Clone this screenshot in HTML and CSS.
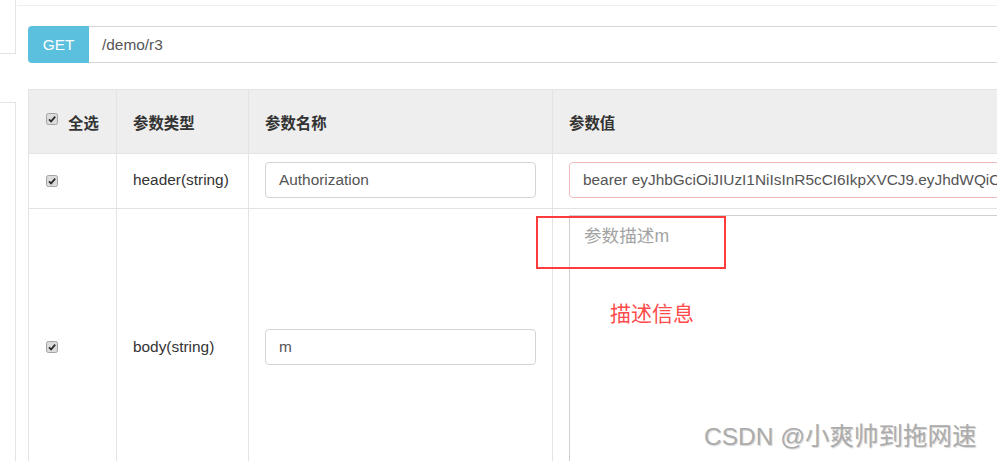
FILE: index.html
```html
<!DOCTYPE html>
<html lang="zh-CN">
<head>
<meta charset="utf-8">
<title>GET /demo/r3</title>
<link rel="stylesheet" href="styles.css">
</head>
<body>
<div class="page">
  <aside class="side">
    <div class="side-top"></div>
    <div class="side-bottom"></div>
  </aside>
  <main class="main">
    <div class="url-bar">
      <span class="method">GET</span>
      <div class="url-input">/demo/r3</div>
    </div>
    <table class="params">
      <colgroup>
        <col class="w-check">
        <col class="w-type">
        <col class="w-name">
        <col class="w-value">
      </colgroup>
      <thead>
        <tr>
          <th class="c-check"><span class="cb cb-head"><svg viewBox="0 0 12 12" width="12" height="12"><rect x="0.5" y="0.5" width="11" height="11" rx="2" fill="#dcdcdc" stroke="#a3a3a3"/><path d="M3 6.3l2.1 2.1L9.2 3.6" fill="none" stroke="#2a2a2a" stroke-width="1.7"/></svg></span><span class="all">全选</span></th>
          <th>参数类型</th>
          <th>参数名称</th>
          <th>参数值</th>
        </tr>
      </thead>
      <tbody>
        <tr class="row-header">
          <td class="c-check"><span class="cb"><svg viewBox="0 0 12 12" width="12" height="12"><rect x="0.5" y="0.5" width="11" height="11" rx="2" fill="#dcdcdc" stroke="#a3a3a3"/><path d="M3 6.3l2.1 2.1L9.2 3.6" fill="none" stroke="#2a2a2a" stroke-width="1.7"/></svg></span></td>
          <td>header(string)</td>
          <td><div class="field">Authorization</div></td>
          <td><div class="field field-error">bearer eyJhbGciOiJIUzI1NiIsInR5cCI6IkpXVCJ9.eyJhdWQiOlsicmVzMSJdLCJ1c2VyX25hbWUiOiJ6aGFuZ3NhbiJ9</div></td>
        </tr>
        <tr class="row-body">
          <td class="c-check"><span class="cb"><svg viewBox="0 0 12 12" width="12" height="12"><rect x="0.5" y="0.5" width="11" height="11" rx="2" fill="#dcdcdc" stroke="#a3a3a3"/><path d="M3 6.3l2.1 2.1L9.2 3.6" fill="none" stroke="#2a2a2a" stroke-width="1.7"/></svg></span></td>
          <td>body(string)</td>
          <td><div class="field">m</div></td>
          <td class="c-area"><div class="area"><span class="placeholder">参数描述m</span></div></td>
        </tr>
      </tbody>
    </table>
  </main>
  <div class="annot-box"></div>
  <div class="annot-text">描述信息</div>
  <div class="watermark">CSDN @小爽帅到拖网速</div>
</div>
</body>
</html>
```

FILE: styles.css
```css
html, body {
  margin: 0;
  padding: 0;
  background: #fff;
}
body {
  width: 1007px;
  height: 461px;
  overflow: hidden;
  font-family: "Liberation Sans", "Noto Sans CJK SC", sans-serif;
  font-size: 15.4px;
  color: #333;
}
.page {
  position: relative;
  display: flex;
  width: 1007px;
  height: 461px;
  overflow: hidden;
}
.side {
  width: 16px;
  flex: none;
  display: flex;
  flex-direction: column;
}
.side-top {
  height: 53px;
  border-right: 1px solid #e3e3e3;
  border-bottom: 1px solid #e3e3e3;
}
.side-bottom {
  margin-top: 48px;
  flex: 1;
  border-right: 1px solid #e3e3e3;
  border-top: 1px solid #e3e3e3;
}
.main {
  width: 969px;
  flex: none;
  margin-left: 1px;
  margin-top: 5px;
  border-top: 1px solid #eeeeee;
  padding-left: 11px;
  overflow: hidden;
}
.url-bar {
  display: flex;
  margin-top: 20px;
  height: 37px;
  width: 1000px;
}
.method {
  width: 61px;
  flex: none;
  background: #5bc0de;
  color: #fff;
  border-radius: 4px 0 0 4px;
  display: flex;
  align-items: center;
  justify-content: center;
  font-size: 15.4px;
}
.url-input {
  flex: 1;
  border: 1px solid #d6d6d6;
  border-left: none;
  display: flex;
  align-items: center;
  padding-left: 13px;
  color: #555;
}
.params {
  margin-top: 26px;
  border-collapse: collapse;
  table-layout: fixed;
  width: 1100px;
  border: 1px solid #e0e0e0;
}
.w-check { width: 88px; }
.w-type { width: 132px; }
.w-name { width: 304px; }
.w-value { width: 576px; }
.params th,
.params td {
  border: 1px solid #e3e3e3;
  padding: 0 16px;
  text-align: left;
  vertical-align: middle;
}
.params th {
  background: #eeeeee;
  height: 63px;
  font-weight: bold;
  color: #333;
}
.params td.c-check,
.params th.c-check {
  padding-left: 17px;
}
.cb {
  display: inline-block;
  width: 12px;
  height: 12px;
  vertical-align: middle;
}
.cb svg {
  display: block;
}
.cb-head {
  vertical-align: 4px;
}
.all {
  margin-left: 10px;
}
.row-header td {
  height: 52px;
  padding-top: 0;
  padding-bottom: 2px;
}
.field {
  box-sizing: border-box;
  height: 36px;
  border: 1px solid #d4d4d4;
  border-radius: 4px;
  padding: 0 13px;
  display: flex;
  align-items: center;
  color: #555;
  white-space: nowrap;
  overflow: hidden;
}
.field-error {
  border-color: #efbcbc;
  width: 600px;
  border-radius: 4px;
}
.row-body td {
  height: 269px;
}
.params td.c-area {
  vertical-align: top;
  padding-top: 6px;
}
.area {
  box-sizing: border-box;
  height: 262px;
  width: 600px;
  border-left: 1px solid #cfcfcf;
  border-top: 1px solid #cfcfcf;
  padding: 8px 14px;
  font-size: 17.6px;
  line-height: 24px;
}
.placeholder {
  color: #a3a3a3;
}
.annot-box {
  position: absolute;
  left: 536px;
  top: 216px;
  width: 190px;
  height: 53px;
  box-sizing: border-box;
  border: 2px solid #ff3c3c;
}
.annot-text {
  position: absolute;
  left: 610px;
  top: 301px;
  font-size: 21px;
  line-height: 26px;
  color: #ff4a4a;
}
.watermark {
  position: absolute;
  left: 704px;
  top: 422px;
  font-size: 24.5px;
  line-height: 30px;
  color: #acacac;
  text-shadow: 1px 1px 1px #d6d6d6, -1px -1px 0 #fff;
  white-space: nowrap;
}
```
